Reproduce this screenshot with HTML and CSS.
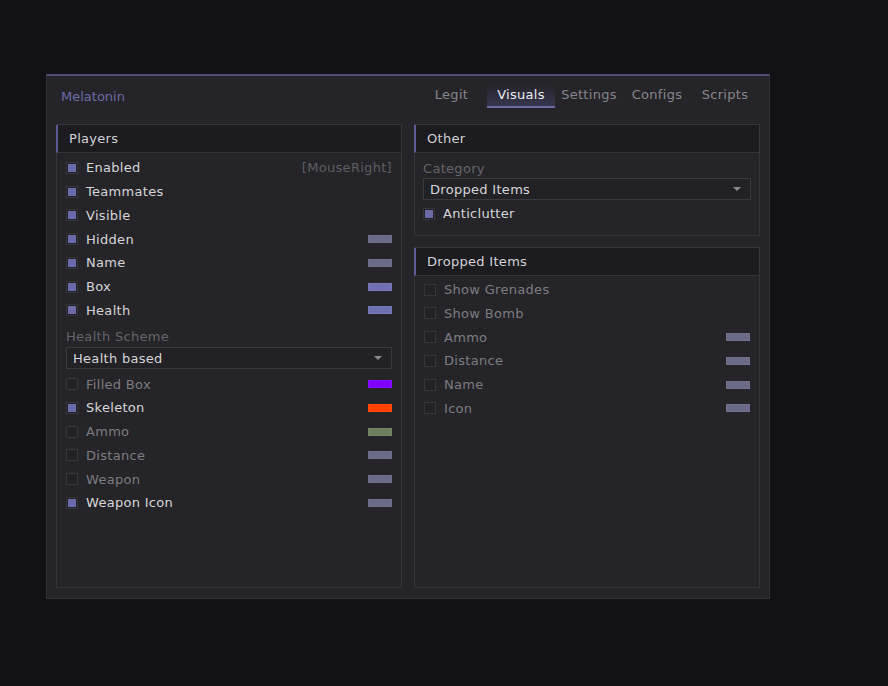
FILE: index.html
```html
<!DOCTYPE html>
<html lang="en">
<head>
  <meta charset="UTF-8">
  <title>Melatonin</title>
  <link rel="stylesheet" href="styles.css">
</head>
<body>
  <div class="window">
    <div class="topbar">
      <div class="brand">Melatonin</div>
      <div class="tabs">
        <div class="tab">Legit</div>
        <div class="tab active">Visuals</div>
        <div class="tab">Settings</div>
        <div class="tab">Configs</div>
        <div class="tab">Scripts</div>
      </div>
    </div>

    <div class="columns">
      <!-- players column -->
      <div class="group grow">
        <div class="group-title">Players</div>
        <div class="group-body players">
          <div class="row on"><span class="check"></span><span class="label">Enabled</span><span class="bind">[MouseRight]</span></div>
          <div class="row on"><span class="check"></span><span class="label">Teammates</span></div>
          <div class="row on"><span class="check"></span><span class="label">Visible</span></div>
          <div class="row on"><span class="check"></span><span class="label">Hidden</span><span class="swatch" style="background:#6a6986"></span></div>
          <div class="row on"><span class="check"></span><span class="label">Name</span><span class="swatch" style="background:#6a6986"></span></div>
          <div class="row on"><span class="check"></span><span class="label">Box</span><span class="swatch" style="background:#6f70b0"></span></div>
          <div class="row on"><span class="check"></span><span class="label">Health</span><span class="swatch" style="background:#6f70b0"></span></div>

          <div class="field-label spaced">Health Scheme</div>
          <div class="select"><span>Health based</span><span class="arrow"></span></div>

          <div class="row"><span class="check"></span><span class="label">Filled Box</span><span class="swatch" style="background:#7f00ff"></span></div>
          <div class="row on"><span class="check"></span><span class="label">Skeleton</span><span class="swatch" style="background:#ff4000"></span></div>
          <div class="row"><span class="check"></span><span class="label">Ammo</span><span class="swatch" style="background:#6b8060"></span></div>
          <div class="row"><span class="check"></span><span class="label">Distance</span><span class="swatch" style="background:#6a6986"></span></div>
          <div class="row"><span class="check"></span><span class="label">Weapon</span><span class="swatch" style="background:#6a6986"></span></div>
          <div class="row on"><span class="check"></span><span class="label">Weapon Icon</span><span class="swatch" style="background:#6a6986"></span></div>
        </div>
      </div>

      <div class="stack">
        <div class="group">
          <div class="group-title">Other</div>
          <div class="group-body other">
            <div class="field-label">Category</div>
            <div class="select"><span>Dropped Items</span><span class="arrow"></span></div>
            <div class="row on"><span class="check"></span><span class="label">Anticlutter</span></div>
          </div>
        </div>

        <div class="group grow">
          <div class="group-title">Dropped Items</div>
          <div class="group-body dropped">
            <div class="row"><span class="check"></span><span class="label">Show Grenades</span></div>
            <div class="row"><span class="check"></span><span class="label">Show Bomb</span></div>
            <div class="row"><span class="check"></span><span class="label">Ammo</span><span class="swatch" style="background:#6a6986"></span></div>
            <div class="row"><span class="check"></span><span class="label">Distance</span><span class="swatch" style="background:#6a6986"></span></div>
            <div class="row"><span class="check"></span><span class="label">Name</span><span class="swatch" style="background:#6a6986"></span></div>
            <div class="row"><span class="check"></span><span class="label">Icon</span><span class="swatch" style="background:#6a6986"></span></div>
          </div>
        </div>
      </div>
    </div>
  </div>
</body>
</html>
```

FILE: styles.css
```css
body {
  margin: 0;
  padding: 74px 0 0 46px;
  background-color: #121116;
  font-family: "DejaVu Sans", Verdana, sans-serif;
  font-size: 13px;
  letter-spacing: 0.3px;
  color: #d4d4d8;
  height: 686px;
  box-sizing: border-box;
}
.window {
  width: 724px;
  height: 525px;
  box-sizing: border-box;
  background-color: #252429;
  border: 1px solid #313036;
  border-top: 2px solid #50507a;
  padding: 0 9px 10px;
  display: flex;
  flex-direction: column;
}
.topbar {
  height: 40px;
  margin-bottom: 8px;
  display: flex;
  align-items: center;
  justify-content: space-between;
}
.brand {
  color: #6b6ba6;
  padding-left: 5px;
  letter-spacing: 0;
}
.tabs {
  display: flex;
  margin-right: 1px;
}
.tab {
  width: 68px;
  height: 24px;
  box-sizing: border-box;
  line-height: 22px;
  text-align: center;
  color: #85858c;
}
.tab:first-child {
  padding-right: 3px;
}
.tab.active {
  color: #ececf0;
  background: linear-gradient(to bottom, rgba(60, 60, 90, 0) 0%, rgba(60, 60, 92, 0.75) 100%);
  border-bottom: 2px solid #6b6ba8;
}
.columns {
  flex: 1;
  display: flex;
  gap: 12px;
}
.columns > .group,
.stack {
  width: 346px;
}
.stack {
  display: flex;
  flex-direction: column;
  gap: 11px;
}
.group {
  border: 1px solid #36353b;
  background-color: #252429;
  display: flex;
  flex-direction: column;
}
.grow {
  flex: 1;
}
.group-title {
  height: 27px;
  line-height: 27px;
  background-color: #1c1b20;
  border-bottom: 1px solid #35343a;
  border-left: 2px solid #5c5c92;
  margin-left: -1px;
  padding-left: 11px;
  color: #d2d2d6;
}
.group-body {
  padding: 0 9px;
}
.group-body.players {
  padding-top: 3px;
}
.group-body.dropped {
  padding-top: 2px;
}
.group-body.other {
  padding: 6px 8px 9px;
}
.row {
  height: 23.75px;
  display: flex;
  align-items: center;
  color: #7c7c82;
}
.row.on {
  color: #d6d6da;
}
.check {
  width: 12px;
  height: 12px;
  box-sizing: border-box;
  border: 1px solid #36353b;
  background-color: #222126;
  margin-right: 8px;
  flex: none;
  padding: 2px;
}
.row.on .check::after {
  content: "";
  display: block;
  width: 8px;
  height: 8px;
  margin: -1px;
  background-color: #6b6ba8;
}
.label {
  flex: 1;
}
.bind {
  color: #5e5e65;
}
.swatch {
  width: 24px;
  height: 8px;
  box-sizing: border-box;
  border: 1px solid rgba(255, 255, 255, 0.06);
}
.field-label {
  height: 19px;
  line-height: 19px;
  color: #65656b;
}
.field-label.spaced {
  height: 20px;
  line-height: 20px;
  margin-top: 5px;
}
.select {
  height: 22px;
  box-sizing: border-box;
  border: 1px solid #3a393f;
  background-color: #222126;
  display: flex;
  align-items: center;
  justify-content: space-between;
  padding: 0 9px 0 6px;
  color: #d6d6da;
  margin-bottom: 3px;
}
.group-body.other .select {
  margin-bottom: 2px;
}
.arrow {
  width: 0;
  height: 0;
  border-left: 4px solid transparent;
  border-right: 4px solid transparent;
  border-top: 4px solid #8a8a90;
}
```
